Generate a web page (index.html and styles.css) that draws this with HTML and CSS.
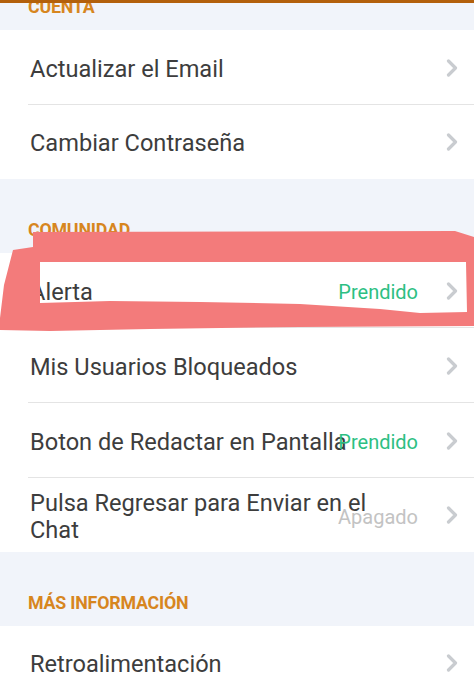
FILE: index.html
```html
<!DOCTYPE html>
<html lang="es">
<head>
<meta charset="utf-8">
<link rel="stylesheet" href="styles.css">
</head>
<body>
<div class="page">
  <div class="topbar"></div>
  <div class="section-head first"><span>CUENTA</span></div>
  <div class="row">
    <span class="label">Actualizar el Email</span>
    <span class="status"></span>
    <svg class="chev" viewBox="0 0 12 18"><path d="M2.5 2 L9.5 9 L2.5 16"/></svg>
  </div>
  <div class="row last">
    <span class="label">Cambiar Contraseña</span>
    <span class="status"></span>
    <svg class="chev" viewBox="0 0 12 18"><path d="M2.5 2 L9.5 9 L2.5 16"/></svg>
  </div>
  <div class="section-head"><span>COMUNIDAD</span></div>
  <div class="row">
    <span class="label">Alerta</span>
    <span class="status on">Prendido</span>
    <svg class="chev" viewBox="0 0 12 18"><path d="M2.5 2 L9.5 9 L2.5 16"/></svg>
  </div>
  <div class="row">
    <span class="label">Mis Usuarios Bloqueados</span>
    <span class="status"></span>
    <svg class="chev" viewBox="0 0 12 18"><path d="M2.5 2 L9.5 9 L2.5 16"/></svg>
  </div>
  <div class="row">
    <span class="label">Boton de Redactar en Pantalla</span>
    <span class="status on">Prendido</span>
    <svg class="chev" viewBox="0 0 12 18"><path d="M2.5 2 L9.5 9 L2.5 16"/></svg>
  </div>
  <div class="row last">
    <span class="label">Pulsa Regresar para Enviar en el Chat</span>
    <span class="status off">Apagado</span>
    <svg class="chev" viewBox="0 0 12 18"><path d="M2.5 2 L9.5 9 L2.5 16"/></svg>
  </div>
  <div class="section-head"><span>MÁS INFORMACIÓN</span></div>
  <div class="row last">
    <span class="label">Retroalimentación</span>
    <span class="status"></span>
    <svg class="chev" viewBox="0 0 12 18"><path d="M2.5 2 L9.5 9 L2.5 16"/></svg>
  </div>

  <svg class="scribble" viewBox="0 0 474 700" width="474" height="700">
    <path fill-rule="evenodd" d="M33 232 L455 231 L474 237 L474 326 L300 327 L150 329 L50 331 L0 330 L0 318 L4 285 L13 250 L33 247 Z
      M40 262 L466 262 L467 312 L420 313 L380 309 L300 304 L200 302 L110 301 L40 303 Z"/>
  </svg>
</div>
</body>
</html>
```
FILE: styles.css
```css
* { box-sizing: border-box; }
html, body { margin: 0; padding: 0; background: #ffffff; }
body {
  font-family: Roboto, "Noto Sans", "Liberation Sans", sans-serif;
  width: 474px;
  overflow: hidden;
}
.page {
  position: relative;
  width: 474px;
  height: 700px;
  overflow: hidden;
}
.topbar {
  height: 3px;
  background: #b3600c;
}
.section-head {
  height: 74px;
  background: #f1f4fa;
  display: flex;
  align-items: flex-end;
  padding: 0 0 15px 28px;
  overflow: hidden;
}
.section-head.first {
  height: 27px;
  padding-bottom: 15px;
}
.section-head span {
  font-size: 17.8px;
  font-weight: 700;
  color: #d7861f;
  line-height: 17px;
  letter-spacing: -0.2px;
}
.row {
  position: relative;
  min-height: 75px;
  display: grid;
  grid-template-columns: 1fr auto 12px;
  align-items: center;
  column-gap: 28px;
  padding: 3px 16px 0 30px;
  background: #ffffff;
}
.row::after {
  content: "";
  position: absolute;
  left: 28px;
  right: 0;
  bottom: 0;
  height: 1px;
  background: #e4e4e4;
}
.row.last { min-height: 74px; }
.row.last::after { display: none; }
.label {
  grid-column: 1 / 3;
  grid-row: 1;
  max-width: 350px;
  font-size: 23.6px;
  line-height: 27px;
  color: #3d3d3d;
}
.status {
  grid-column: 2;
  grid-row: 1;
  justify-self: end;
  font-size: 20px;
  color: #2dbf83;
}
.status.off { color: #c3c3c3; }
.chev {
  grid-column: 3;
  grid-row: 1;
  width: 12px;
  height: 18px;
  margin-top: -3px;
  fill: none;
  stroke: #c9ccd0;
  stroke-width: 3.2;
  stroke-linecap: round;
  stroke-linejoin: round;
}
.scribble {
  position: absolute;
  left: 0;
  top: 0;
  pointer-events: none;
  fill: #f37b7b;
}
```
